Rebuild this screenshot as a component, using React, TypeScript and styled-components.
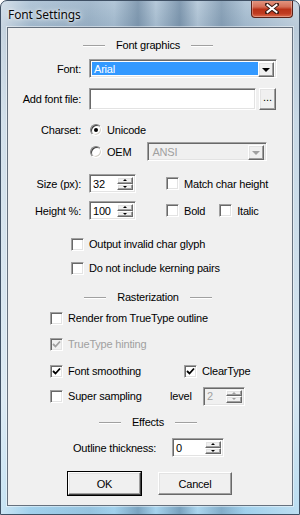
import React from 'react';
import styled, { createGlobalStyle, css } from 'styled-components';

const GlobalStyle = createGlobalStyle`
  html, body {
    margin: 0;
    padding: 0;
    background: #ffffff;
  }
  body {
    font-family: "Liberation Sans", Arial, sans-serif;
    font-size: 11px;
    letter-spacing: -0.2px;
    color: #000;
  }
`;

const sunken = css`
  box-sizing: border-box;
  border: 1px solid;
  border-color: #a0a0a0 #ffffff #ffffff #a0a0a0;
  box-shadow: inset 1px 1px 0 #696969, inset -1px -1px 0 #e3e3e3;
`;

const raised = css`
  box-sizing: border-box;
  background: #f0f0f0;
  border: 1px solid;
  border-color: #ffffff #696969 #696969 #ffffff;
  box-shadow: inset -1px -1px 0 #a0a0a0, inset 1px 1px 0 #e3e3e3;
`;

const Frame = styled.div`
  position: relative;
  width: 300px;
  height: 515px;
  box-sizing: border-box;
  display: flex;
  flex-direction: column;
  border: 1px solid #3f5064;
  border-radius: 7px 7px 0 0;
  overflow: hidden;
  background:
    linear-gradient(90deg,
      rgba(255, 255, 255, 0.45) 0%,
      rgba(255, 255, 255, 0) 10%,
      rgba(70, 100, 130, 0.12) 30%,
      rgba(255, 255, 255, 0) 38%,
      rgba(60, 90, 120, 0.38) 46%,
      rgba(255, 255, 255, 0.05) 52%,
      rgba(60, 90, 120, 0.4) 60%,
      rgba(255, 255, 255, 0.1) 66%,
      rgba(60, 90, 120, 0.3) 74%,
      rgba(255, 255, 255, 0) 82%,
      rgba(255, 255, 255, 0.3) 100%),
    linear-gradient(180deg, #b3c7d8 0px, #9fb6ca 26px, #b3cadc 120px, #c4dbeb 400px, #9fd0ec 515px);
`;

const TitleBar = styled.div`
  height: 26px;
  display: flex;
  align-items: flex-start;
  justify-content: space-between;
  padding-left: 7px;
  padding-right: 6px;
  flex-shrink: 0;
`;

const Title = styled.div`
  margin-top: 6px;
  font-family: "Noto Sans", "Open Sans", sans-serif;
  font-size: 12px;
  letter-spacing: -0.1px;
  line-height: 16px;
  color: #0b0b0b;
  text-shadow: 0 0 6px rgba(255, 255, 255, 0.95), 0 0 3px rgba(255, 255, 255, 0.9);
`;

const CloseButton = styled.div`
  margin-top: -1px;
  width: 42px;
  height: 18px;
  box-sizing: border-box;
  display: flex;
  align-items: center;
  justify-content: center;
  border: 1px solid #5a2118;
  border-top: none;
  border-radius: 0 0 4px 4px;
  background: linear-gradient(180deg, #e49a86 0%, #d46f57 40%, #b93218 55%, #c03c22 80%, #dc6a4c 100%);
  box-shadow: inset 0 0 0 1px rgba(255, 255, 255, 0.3);
`;

const Client = styled.div`
  margin-left: 6px;
  width: 286px;
  height: 479px;
  box-sizing: border-box;
  border: 1px solid #66717e;
  box-shadow: 0 0 0 1px rgba(255, 255, 255, 0.45);
  background: #f0f0f0;
  display: flex;
  flex-direction: column;
`;

const SectionHeader = styled.div<{ $mt: number }>`
  display: flex;
  align-items: center;
  justify-content: center;
  gap: 11px;
  height: 14px;
  margin-top: ${p => p.$mt}px;
  padding-right: 4px;
`;

const Rule = styled.span`
  width: 22px;
  height: 1px;
  background: #a0a0a0;
  box-shadow: 0 1px 0 #ffffff;
`;

const Row = styled.div<{ $mt: number; $h: number; $pl?: number }>`
  display: flex;
  align-items: center;
  height: ${p => p.$h}px;
  margin-top: ${p => p.$mt}px;
  padding-left: ${p => p.$pl ?? 0}px;
  line-height: 14px;
`;

const Label = styled.span`
  width: 73px;
  margin-right: 8px;
  text-align: right;
  white-space: nowrap;
`;

const Text = styled.span<{ $disabled?: boolean; $w?: number }>`
  white-space: nowrap;
  color: ${p => (p.$disabled ? '#a0a0a0' : '#000')};
  ${p => (p.$w ? `width: ${p.$w}px;` : '')}
`;

const Combo = styled.div<{ $w: number; $disabled?: boolean }>`
  ${sunken};
  width: ${p => p.$w}px;
  height: 19px;
  padding: 2px;
  display: flex;
  background: ${p => (p.$disabled ? '#f0f0f0' : '#ffffff')};
  margin-left: ${p => (p.$disabled ? 16 : 0)}px;
`;

const ComboValue = styled.div<{ $selected?: boolean; $disabled?: boolean }>`
  flex: 1;
  display: flex;
  align-items: center;
  padding-left: 2px;
  background: ${p => (p.$selected ? '#3399ff' : 'transparent')};
  color: ${p => (p.$selected ? '#ffffff' : p.$disabled ? '#a0a0a0' : '#000')};
`;

const DropButton = styled.div`
  ${raised};
  width: 16px;
  height: 15px;
  display: flex;
  align-items: center;
  justify-content: center;
`;

const Arrow = styled.span<{ $dir: 'up' | 'down'; $size: number; $disabled?: boolean }>`
  width: 0;
  height: 0;
  border-left: ${p => p.$size}px solid transparent;
  border-right: ${p => p.$size}px solid transparent;
  ${p =>
    p.$dir === 'down'
      ? `border-top: ${p.$size}px solid ${p.$disabled ? '#a0a0a0' : '#000'};`
      : `border-bottom: ${p.$size}px solid ${p.$disabled ? '#a0a0a0' : '#000'};`}
`;

const TextField = styled.div<{ $w: number }>`
  ${sunken};
  width: ${p => p.$w}px;
  height: 22px;
  background: #ffffff;
`;

const BrowseButton = styled.div`
  ${raised};
  width: 17px;
  height: 22px;
  margin-left: 3px;
  display: flex;
  align-items: flex-end;
  justify-content: center;
  padding-bottom: 5px;
  letter-spacing: 0;
`;

const Spin = styled.div<{ $w: number; $ml?: number; $disabled?: boolean }>`
  ${sunken};
  width: ${p => p.$w}px;
  height: 19px;
  padding: 2px;
  margin-left: ${p => p.$ml ?? 0}px;
  display: flex;
  background: ${p => (p.$disabled ? '#f0f0f0' : '#ffffff')};
  color: ${p => (p.$disabled ? '#a0a0a0' : '#000')};
`;

const SpinValue = styled.div`
  flex: 1;
  display: flex;
  align-items: center;
  padding-left: 1px;
`;

const SpinButtons = styled.div`
  display: flex;
  flex-direction: column;
  width: 16px;
`;

const SpinButton = styled.div<{ $h: number }>`
  ${raised};
  height: ${p => p.$h}px;
  display: flex;
  align-items: center;
  justify-content: center;
`;

const CheckItem = styled.div<{ $ml?: number; $w?: number }>`
  display: flex;
  align-items: center;
  gap: 5px;
  margin-left: ${p => p.$ml ?? 0}px;
  ${p => (p.$w ? `width: ${p.$w}px;` : '')}
`;

const Box = styled.span<{ $disabled?: boolean }>`
  ${sunken};
  width: 13px;
  height: 13px;
  flex-shrink: 0;
  display: flex;
  align-items: center;
  justify-content: center;
  background: ${p => (p.$disabled ? '#f0f0f0' : '#ffffff')};
`;

const Radio = styled.span`
  width: 12px;
  height: 12px;
  box-sizing: border-box;
  flex-shrink: 0;
  border-radius: 50%;
  border: 1px solid;
  border-color: #808080 #ffffff #ffffff #808080;
  box-shadow: inset 1px 1px 0 #404040, inset -1px -1px 0 #d4d0c8;
  background: #ffffff;
  display: flex;
  align-items: center;
  justify-content: center;
`;

const Dot = styled.span`
  width: 4px;
  height: 4px;
  border-radius: 50%;
  background: #000;
`;

const PushButton = styled.div<{ $w: number; $ml?: number; $default?: boolean }>`
  ${raised};
  width: ${p => p.$w}px;
  height: 23px;
  margin-left: ${p => p.$ml ?? 0}px;
  display: flex;
  align-items: center;
  justify-content: center;
  ${p =>
    p.$default
      ? `outline: 1px solid #000; outline-offset: 0; border-color: #ffffff #404040 #404040 #ffffff;`
      : ''}
`;

const CheckMark = ({ disabled }: { disabled?: boolean }) => (
  <svg width="9" height="9" viewBox="0 0 9 9">
    <path d="M1 4 L3.5 6.5 L8 1.5" fill="none" stroke={disabled ? '#a0a0a0' : '#000'} strokeWidth="1.8" />
  </svg>
);

const Check = ({
  label,
  checked,
  disabled,
  ml,
  w,
}: {
  label: string;
  checked?: boolean;
  disabled?: boolean;
  ml?: number;
  w?: number;
}) => (
  <CheckItem $ml={ml} $w={w}>
    <Box $disabled={disabled}>{checked && <CheckMark disabled={disabled} />}</Box>
    <Text $disabled={disabled}>{label}</Text>
  </CheckItem>
);

const SpinBox = ({ value, w, ml, disabled }: { value: string; w: number; ml?: number; disabled?: boolean }) => (
  <Spin $w={w} $ml={ml} $disabled={disabled}>
    <SpinValue>{value}</SpinValue>
    <SpinButtons>
      <SpinButton $h={8}>
        <Arrow $dir="up" $size={2} $disabled={disabled} />
      </SpinButton>
      <SpinButton $h={7}>
        <Arrow $dir="down" $size={2} $disabled={disabled} />
      </SpinButton>
    </SpinButtons>
  </Spin>
);

const Header = ({ title, mt }: { title: string; mt: number }) => (
  <SectionHeader $mt={mt}>
    <Rule />
    <span>{title}</span>
    <Rule />
  </SectionHeader>
);

export default function App() {
  return (
    <>
      <GlobalStyle />
      <Frame>
        <TitleBar>
          <Title>Font Settings</Title>
          <CloseButton>
            <svg width="14" height="11" viewBox="0 0 14 11">
              <path d="M2 1.5 L12 9.5 M12 1.5 L2 9.5" stroke="#3a1a14" strokeWidth="4" strokeLinecap="square" />
              <path d="M2.5 2 L11.5 9 M11.5 2 L2.5 9" stroke="#ffffff" strokeWidth="2" strokeLinecap="square" />
            </svg>
          </CloseButton>
        </TitleBar>
        <Client>
          <Header title="Font graphics" mt={10} />

          <Row $mt={7} $h={19}>
            <Label>Font:</Label>
            <Combo $w={188}>
              <ComboValue $selected>Arial</ComboValue>
              <DropButton>
                <Arrow $dir="down" $size={4} />
              </DropButton>
            </Combo>
          </Row>

          <Row $mt={10} $h={22}>
            <Label>Add font file:</Label>
            <TextField $w={167} />
            <BrowseButton>...</BrowseButton>
          </Row>

          <Row $mt={12} $h={16}>
            <Label>Charset:</Label>
            <CheckItem $ml={1}>
              <Radio>
                <Dot />
              </Radio>
              <Text>Unicode</Text>
            </CheckItem>
          </Row>

          <Row $mt={4} $h={19} $pl={82}>
            <CheckItem>
              <Radio />
              <Text>OEM</Text>
            </CheckItem>
            <Combo $w={120} $disabled>
              <ComboValue $disabled>ANSI</ComboValue>
              <DropButton>
                <Arrow $dir="down" $size={4} $disabled />
              </DropButton>
            </Combo>
          </Row>

          <Row $mt={13} $h={19}>
            <Label>Size (px):</Label>
            <SpinBox value="32" w={47} />
            <Check label="Match char height" ml={30} />
          </Row>

          <Row $mt={8} $h={19}>
            <Label>Height %:</Label>
            <SpinBox value="100" w={47} />
            <Check label="Bold" ml={30} />
            <Check label="Italic" ml={14} />
          </Row>

          <Row $mt={17} $h={14} $pl={63}>
            <Check label="Output invalid char glyph" />
          </Row>

          <Row $mt={10} $h={14} $pl={63}>
            <Check label="Do not include kerning pairs" />
          </Row>

          <Header title="Rasterization" mt={15} />

          <Row $mt={7} $h={14} $pl={42}>
            <Check label="Render from TrueType outline" />
          </Row>

          <Row $mt={12} $h={14} $pl={42}>
            <Check label="TrueType hinting" checked disabled />
          </Row>

          <Row $mt={13} $h={14} $pl={42}>
            <Check label="Font smoothing" checked w={134} />
            <Check label="ClearType" checked />
          </Row>

          <Row $mt={9} $h={18} $pl={42}>
            <Check label="Super sampling" w={120} />
            <Text $w={33}>level</Text>
            <SpinBox value="2" w={42} disabled />
          </Row>

          <Header title="Effects" mt={10} />

          <Row $mt={9} $h={19} $pl={65}>
            <Text $w={99}>Outline thickness:</Text>
            <SpinBox value="0" w={52} />
          </Row>

          <Row $mt={15} $h={23} $pl={60}>
            <PushButton $w={73} $default>
              OK
            </PushButton>
            <PushButton $w={74} $ml={17}>
              Cancel
            </PushButton>
          </Row>
        </Client>
      </Frame>
    </>
  );
}
